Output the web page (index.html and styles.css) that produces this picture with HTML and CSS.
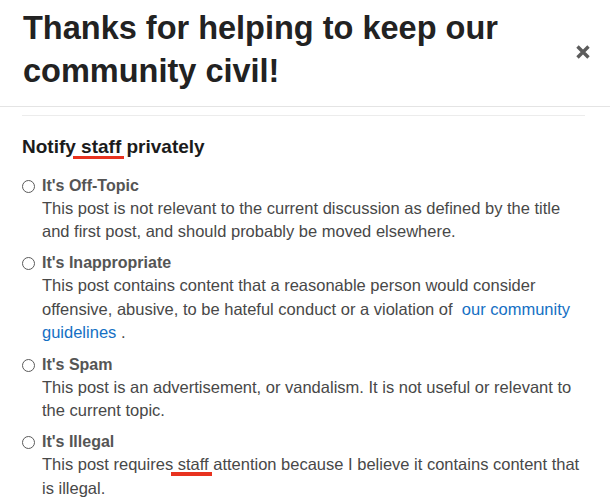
FILE: index.html
```html
<!DOCTYPE html>
<html lang="en">
<head>
<meta charset="utf-8">
<title>Flag post</title>
<link rel="stylesheet" href="styles.css">
</head>
<body>
<div class="modal">
  <header class="modal-header">
    <h1 class="title">Thanks for helping to keep our community civil!</h1>
    <button class="close" aria-label="Close">
      <svg viewBox="0 0 16 16" width="16" height="16"><path d="M2.5 2.5 L13.5 13.5 M13.5 2.5 L2.5 13.5" stroke="#5c5c5c" stroke-width="3.4" stroke-linecap="butt" fill="none"/></svg>
    </button>
  </header>
  <div class="modal-body">
    <div class="divider"></div>
    <h2 class="section-title">Notify <span class="mark mark-head">staff</span> privately</h2>
    <ul class="options">
      <li class="option">
        <span class="radio"></span>
        <div class="option-text">
          <div class="option-label">It's Off-Topic</div>
          <div class="option-desc">This post is not relevant to the current discussion as defined by the title and first post, and should probably be moved elsewhere.</div>
        </div>
      </li>
      <li class="option">
        <span class="radio"></span>
        <div class="option-text">
          <div class="option-label">It's Inappropriate</div>
          <div class="option-desc">This post contains content that a reasonable person would consider offensive, abusive, to be hateful conduct or a violation of&nbsp; <a class="link" href="#">our community guidelines</a> .</div>
        </div>
      </li>
      <li class="option">
        <span class="radio"></span>
        <div class="option-text">
          <div class="option-label">It's Spam</div>
          <div class="option-desc">This post is an advertisement, or vandalism. It is not useful or relevant to the current topic.</div>
        </div>
      </li>
      <li class="option">
        <span class="radio"></span>
        <div class="option-text">
          <div class="option-label">It's Illegal</div>
          <div class="option-desc">This post requires <span class="mark mark-desc">staff</span> attention because I believe it contains content that is illegal.</div>
        </div>
      </li>
    </ul>
  </div>
</div>
</body>
</html>
```
FILE: styles.css
```css
html, body {
  margin: 0;
  padding: 0;
  background: #ffffff;
}

body {
  font-family: "Liberation Sans", Arial, Helvetica, sans-serif;
  color: #222222;
}

.modal {
  width: 610px;
}

.modal-header {
  display: flex;
  justify-content: space-between;
  align-items: flex-start;
  padding: 7px 19px 13.6px 23px;
  border-bottom: 1px solid #e4e4e4;
}

.title {
  margin: 0;
  flex: 1;
  font-size: 32.5px;
  line-height: 42.7px;
  font-weight: 700;
  color: #222222;
}

.close {
  margin: 37px 0 0 20px;
  padding: 0;
  width: 16px;
  height: 16px;
  border: 0;
  background: none;
  display: flex;
}

.modal-body {
  padding: 8px 25px 0 22px;
}

.divider {
  border-top: 1px solid #ececec;
}

.section-title {
  margin: 19px 0 0 0;
  font-size: 19px;
  line-height: 24px;
  font-weight: 700;
  color: #1b1b1b;
}

.mark {
  position: relative;
}

.mark::after {
  content: "";
  position: absolute;
  background: #e8321f;
}

.mark-head::after {
  left: -8px;
  right: -3px;
  top: 19.5px;
  height: 3.5px;
}

.mark-desc::after {
  left: -7px;
  right: -3px;
  top: 17px;
  height: 3.5px;
}

.options {
  list-style: none;
  margin: 14.5px 0 0 0;
  padding: 0;
  display: flex;
  flex-direction: column;
  gap: 8.5px;
}

.option {
  display: flex;
  gap: 7px;
}

.radio {
  flex: none;
  width: 11px;
  height: 11px;
  margin-top: 6px;
  border: 1px solid #5a5a5a;
  border-radius: 50%;
}

.option-text {
  flex: 1;
}

.option-label {
  font-size: 16px;
  line-height: 23px;
  font-weight: 700;
  color: #555555;
}

.option-desc {
  font-size: 16.5px;
  line-height: 23.2px;
  color: #484848;
}

.link {
  color: #1570c4;
  text-decoration: none;
}
```
